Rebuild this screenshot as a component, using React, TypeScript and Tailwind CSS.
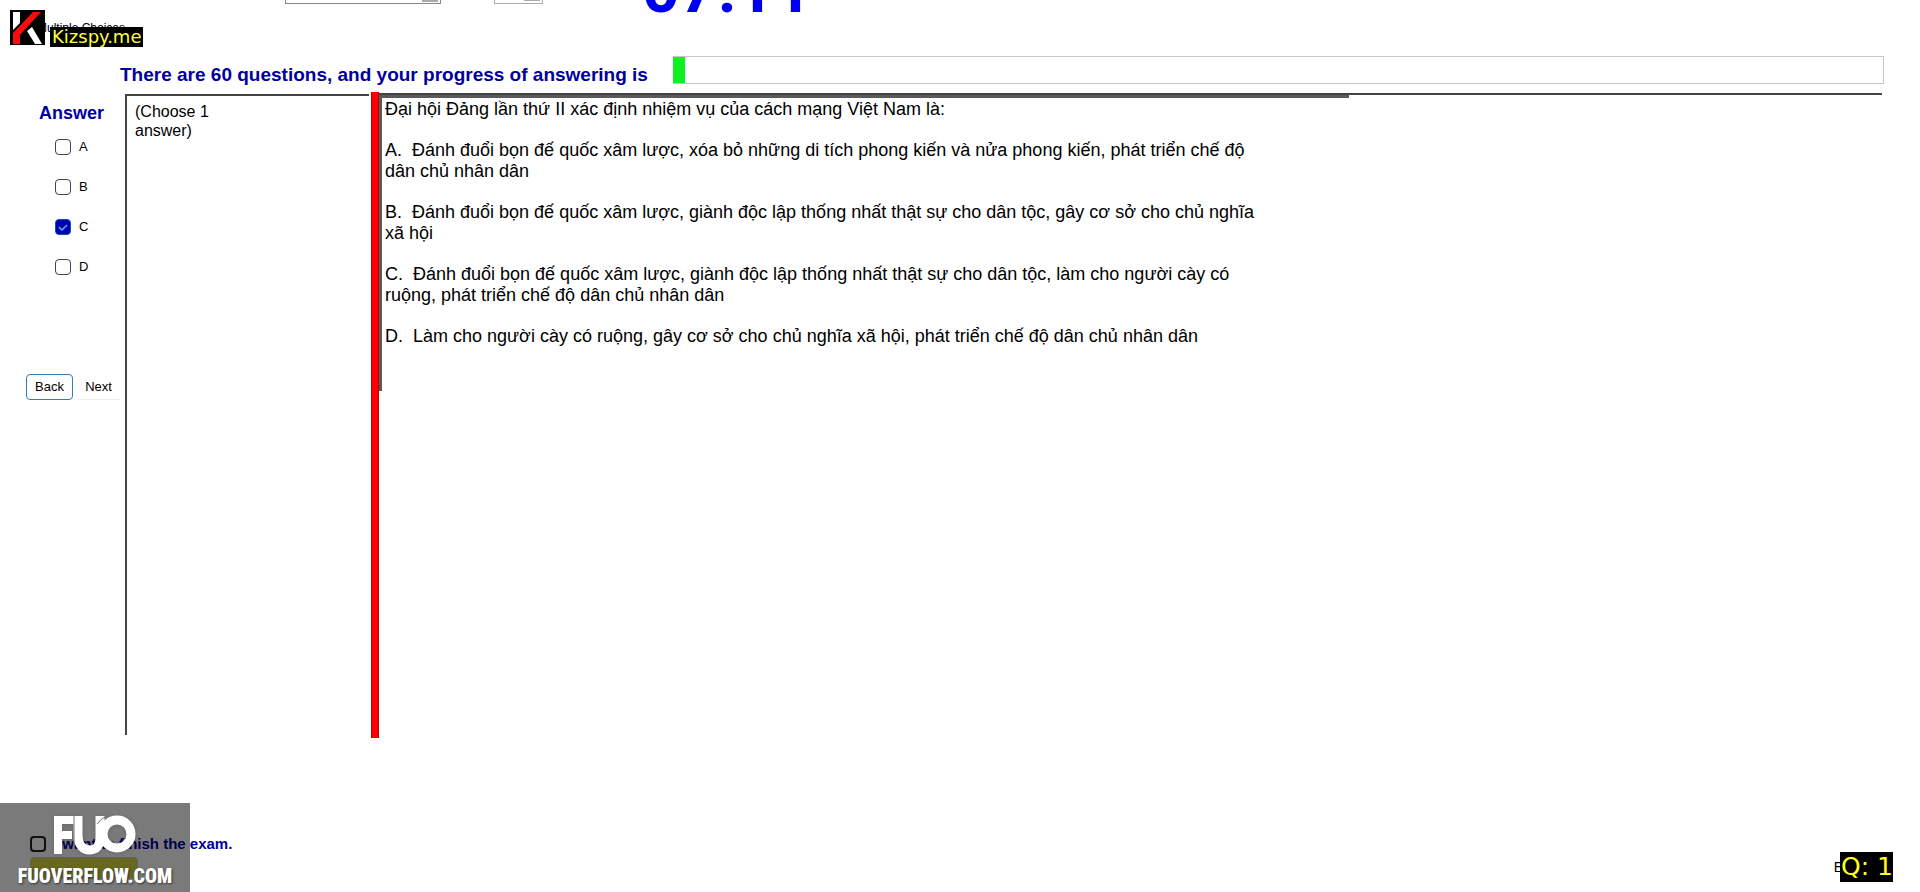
import { useState } from "react";

const OPTIONS = ["A", "B", "C", "D"];

const QUESTION = [
  "Đại hội Đảng lần thứ II xác định nhiệm vụ của cách mạng Việt Nam là:",
  "A.\u00a0 Đánh đuổi bọn đế quốc xâm lược, xóa bỏ những di tích phong kiến và nửa phong kiến, phát triển chế độ dân chủ nhân dân",
  "B.\u00a0 Đánh đuổi bọn đế quốc xâm lược, giành độc lập thống nhất thật sự cho dân tộc, gây cơ sở cho chủ nghĩa xã hội",
  "C.\u00a0 Đánh đuổi bọn đế quốc xâm lược, giành độc lập thống nhất thật sự cho dân tộc, làm cho người cày có ruộng, phát triển chế độ dân chủ nhân dân",
  "D.\u00a0 Làm cho người cày có ruộng, gây cơ sở cho chủ nghĩa xã hội, phát triển chế độ dân chủ nhân dân",
];

function KizspyLogo() {
  return (
    <svg viewBox="0 0 35 35" className="h-[35px] w-[35px] shrink-0" aria-hidden="true">
      <rect width="35" height="35" fill="#000" />
      <path d="M3 2h7v11l-7 7z" fill="#fff" />
      <path d="M23 2h8L10 25v9H3V23z" fill="#f80d0d" />
      <path d="M17 21l5-4 10 17h-7z" fill="#fff" />
    </svg>
  );
}

function FuoLogo() {
  return (
    <svg viewBox="0 0 82 40" className="h-10 w-[82px] drop-shadow-sm" fill="none" stroke="#fff" aria-hidden="true">
      <path d="M4 39V1M0 5h20M4 20h14" strokeWidth="8" />
      <path d="M24 1v19c0 10 5 15 12 15 7 0 10-5 10-12V1" strokeWidth="9" />
      <path d="M20 1v38M43 9a21 21 0 0 1 8-7" stroke="#777" strokeWidth="1" />
      <circle cx="63" cy="19" r="14" strokeWidth="9" />
    </svg>
  );
}

function AnswerBox({ label, checked, onToggle }: { label: string; checked: boolean; onToggle: () => void }) {
  return (
    <label className="flex h-4 items-center gap-2 text-[13px]">
      <span className="grid">
        <input
          type="checkbox"
          checked={checked}
          onChange={onToggle}
          className="col-start-1 row-start-1 size-4 appearance-none rounded border border-[#444] bg-white checked:border-[#0055bb] checked:bg-[#0000a8]"
        />
        {checked && (
          <svg viewBox="0 0 16 16" className="pointer-events-none col-start-1 row-start-1 size-4" fill="none" stroke="#5cb4ff" strokeWidth="1.5">
            <path d="M4 8l3 3 5-5" />
          </svg>
        )}
      </span>
      {label}
    </label>
  );
}

export default function App() {
  const [answer, setAnswer] = useState("C");
  const [finish, setFinish] = useState(false);

  return (
    <div className="relative flex min-h-screen flex-col overflow-hidden bg-white font-['Liberation_Sans',Arial,sans-serif] text-black">
      <header className="flex h-[14px] items-end overflow-hidden pl-[285px]">
        <div className="mb-[10px] flex shrink-0 items-end">
          <select aria-label="Font" className="h-6 w-[156px] appearance-none border border-[#888] bg-white bg-[linear-gradient(#aaa,#aaa)] bg-[length:16px_2px] bg-[position:right_2px_bottom_1px] bg-no-repeat" />
          <select aria-label="Size" className="ml-[53px] h-6 w-[49px] appearance-none border border-[#aaa] bg-white bg-[linear-gradient(#aaa,#aaa)] bg-[length:16px_2px] bg-[position:right_2px_bottom_2px] bg-no-repeat" />
        </div>
        <div className="-mb-[14px] ml-[99px] font-['Roboto','Liberation_Sans',sans-serif] text-[66px] leading-[76px] font-bold text-[#0000f0]">07:11</div>
      </header>

      <div className="h-[42px] pt-[6px] pl-[37px] text-xs leading-4">Multiple Choices</div>

      <div className="flex h-7 items-center pr-9 pl-[120px]">
        <p className="w-[553px] shrink-0 pt-[9px] text-[19px] leading-5 font-bold whitespace-nowrap text-[#0000a0]">
          There are 60 questions, and your progress of answering is
        </p>
        <div role="progressbar" aria-label="Answered" aria-valuenow={1} aria-valuemin={0} aria-valuemax={60} className="h-7 flex-1 border border-l-0 border-[#c8c8c8]">
          <div className="h-full w-3 bg-[#10f020]" />
        </div>
      </div>

      <main className="flex flex-1 pt-2 pr-[38px]">
        <aside className="flex w-[125px] shrink-0 flex-col pt-[11px]">
          <h2 className="pl-[39px] text-[18px] leading-5 font-bold text-[#0000a0]">Answer</h2>
          <div className="flex flex-col gap-6 pt-4 pl-[55px]">
            {OPTIONS.map((o) => (
              <AnswerBox key={o} label={o} checked={answer === o} onToggle={() => setAnswer(answer === o ? "" : o)} />
            ))}
          </div>
          <div className="flex gap-1 pt-[99px] pl-[26px] text-[13px]">
            <button className="h-[26px] w-[47px] rounded border border-[#2f7fb5]">Back</button>
            <button className="h-[26px] w-[43px] border-b border-[#eee]">Next</button>
          </div>
        </aside>

        <section className="mt-[2px] mb-[3px] w-[244px] shrink-0 border-t-2 border-l-2 border-[#444] py-[6px] pl-2 text-base leading-[19px]">
          <p className="w-[90px]">(Choose 1 answer)</p>
        </section>

        <div className="ml-[2px] w-2 shrink-0 border-x border-[#c00000] bg-[#ff0000]" />

        <section className="mt-[1px] min-w-0 flex-1 self-start border-t-2 border-[#444]">
          <div className="h-[296px] max-w-[970px] border-t-3 border-l-3 border-[#5a5a5a] pt-[1px] pr-[84px] pl-[3px] text-[18px] leading-[21px]">
            <div className="flex flex-col gap-5">
              {QUESTION.map((line) => (
                <p key={line}>{line}</p>
              ))}
            </div>
          </div>
        </section>
      </main>

      <footer className="flex h-[154px] shrink-0 justify-between pt-[96px] pr-[63px] pl-[30px]">
        <div>
          <label className="flex items-center gap-2 text-[15px] leading-5 font-bold whitespace-nowrap text-[#0000a0]">
            <input
              type="checkbox"
              checked={finish}
              onChange={() => setFinish(!finish)}
              className="size-4 appearance-none rounded border-2 border-[#222] bg-white"
            />
            I want to finish the exam.
          </label>
          <button aria-label="Finish" className="mt-[3px] block h-[22px] w-[108px] rounded border border-[#ccc] bg-[#d8d840]" />
        </div>
        <span className="pt-[25px] text-sm leading-4">Exit</span>
      </footer>

      <div className="absolute top-[10px] left-[10px] flex items-end gap-[5px]">
        <KizspyLogo />
        <span className="-mb-[2px] bg-black px-0.5 font-['DejaVu_Sans',sans-serif] text-[18px] leading-5 text-[#ffff40]">Kizspy.me</span>
      </div>

      <div className="absolute bottom-0 left-0 flex h-[89px] w-[190px] flex-col items-center bg-black/52 pt-3 text-white">
        <FuoLogo />
        <span className="pt-[9px] font-['Liberation_Sans_Narrow','Roboto_Condensed','Liberation_Sans',sans-serif] text-[20px] leading-6 font-black whitespace-nowrap [text-shadow:1px_1px_2px_#333]">FUOVERFLOW.COM</span>
      </div>

      <div className="absolute right-[27px] bottom-[10px] bg-black pl-px font-['DejaVu_Sans',sans-serif] text-[25px] leading-[30px] text-[#ffff20]">Q: 1</div>
    </div>
  );
}
